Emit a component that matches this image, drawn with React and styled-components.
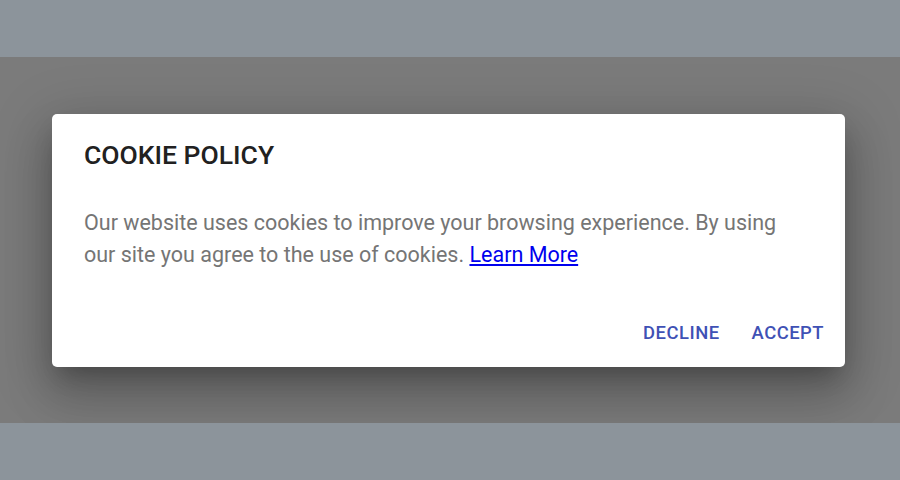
import React from 'react'
import styled, { createGlobalStyle } from 'styled-components'

const GlobalStyle = createGlobalStyle`
  html, body {
    margin: 0;
    padding: 0;
    background: #8c949b;
    font-family: Roboto, "Liberation Sans", Arial, sans-serif;
  }
`

const Page = styled.div`
  display: flex;
  flex-direction: column;
  height: 480px;
`

const Band = styled.div`
  height: 57px;
  background: #8c949b;
`

const Backdrop = styled.div`
  height: 366px;
  background: #7b7b7b;
  display: flex;
  align-items: center;
  justify-content: center;
`

const Dialog = styled.div`
  width: 793px;
  height: 253px;
  box-sizing: border-box;
  margin-right: 3px;
  background: #fff;
  border-radius: 5px;
  box-shadow: 0 13px 22px -8px rgba(0, 0, 0, 0.25),
    0 29px 46px 4px rgba(0, 0, 0, 0.16), 0 11px 56px 10px rgba(0, 0, 0, 0.14);
  display: flex;
  flex-direction: column;
`

const Title = styled.h2`
  margin: 0;
  padding: 22px 32px 0;
  font-size: 26.5px;
  line-height: 38px;
  font-weight: 500;
  color: #212121;
`

const Content = styled.p`
  margin: 0;
  padding: 33px 50px 0 32px;
  font-size: 21.5px;
  line-height: 32px;
  color: #757575;
`

const Link = styled.a`
  color: #0000ee;
  text-decoration: underline;
`

const Actions = styled.div`
  margin-top: auto;
  display: flex;
  justify-content: flex-end;
  gap: 12px;
  padding: 0 11px 13px;
`

const Button = styled.button`
  border: none;
  background: transparent;
  font-family: inherit;
  font-size: 18.4px;
  line-height: 28px;
  font-weight: 500;
  letter-spacing: 0.5px;
  text-transform: uppercase;
  color: #3f51b5;
  padding: 7px 10px;
  cursor: pointer;
`

export default function App() {
  return (
    <>
      <GlobalStyle />
      <Page>
        <Band />
        <Backdrop>
          <Dialog>
            <Title>COOKIE POLICY</Title>
            <Content>
              Our website uses cookies to improve your browsing experience. By using
              our site you agree to the use of cookies. <Link href="#">Learn More</Link>
            </Content>
            <Actions>
              <Button>Decline</Button>
              <Button>Accept</Button>
            </Actions>
          </Dialog>
        </Backdrop>
        <Band />
      </Page>
    </>
  )
}
